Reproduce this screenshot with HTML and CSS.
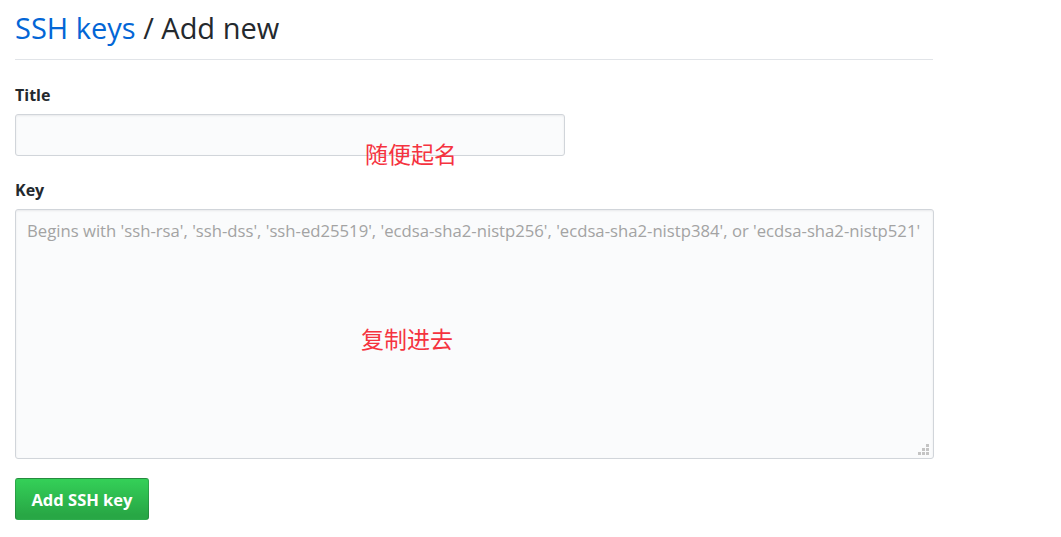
FILE: index.html
```html
<!DOCTYPE html>
<html lang="zh">
<head>
<meta charset="utf-8">
<title>SSH keys / Add new</title>
<link rel="stylesheet" href="styles.css">
</head>
<body>
<main class="page">
  <h1 class="subhead"><a class="crumb" href="#">SSH keys</a> / Add new</h1>
  <form class="form">
    <div class="group">
      <label class="label" for="title">Title</label>
      <div class="field-wrap">
        <input class="input title-input" id="title" type="text">
        <span class="note note-title">随便起名</span>
      </div>
    </div>
    <div class="group">
      <label class="label" for="key">Key</label>
      <div class="field-wrap">
        <textarea class="input key-input" id="key" placeholder="Begins with 'ssh-rsa', 'ssh-dss', 'ssh-ed25519', 'ecdsa-sha2-nistp256', 'ecdsa-sha2-nistp384', or 'ecdsa-sha2-nistp521'"></textarea>
        <span class="note note-key">复制进去</span>
        <svg class="grip" width="12" height="12" viewBox="0 0 12 12"><rect x="8" y="0" width="3" height="3"/><rect x="4" y="4" width="3" height="3"/><rect x="8" y="4" width="3" height="3"/><rect x="0" y="8" width="3" height="3"/><rect x="4" y="8" width="3" height="3"/><rect x="8" y="8" width="3" height="3"/></svg>
      </div>
    </div>
    <button class="btn" type="button">Add SSH key</button>
  </form>
</main>
</body>
</html>
```
FILE: styles.css
```css
html, body {
  margin: 0;
  padding: 0;
  background: #fff;
}
body {
  font-family: "Open Sans", "Noto Sans", "Liberation Sans", "Noto Sans CJK SC", sans-serif;
  color: #24292e;
}
.page {
  width: 918px;
  padding-left: 15px;
  padding-top: 9px;
}
.subhead {
  margin: 0;
  font-size: 29px;
  font-weight: 400;
  line-height: 38px;
  padding-bottom: 12px;
  border-bottom: 1px solid #e1e4e8;
}
.crumb {
  color: #0366d6;
  text-decoration: none;
}
.form {
  display: flex;
  flex-direction: column;
  padding-top: 24px;
}
.group {
  display: flex;
  flex-direction: column;
  margin-bottom: 23px;
}
.group:nth-child(2) {
  margin-bottom: 19px;
}
.label {
  font-size: 16px;
  font-weight: 700;
  line-height: 22px;
  margin-bottom: 8px;
}
.field-wrap {
  position: relative;
}
.input {
  box-sizing: border-box;
  display: block;
  background: #fafbfc;
  border: 1px solid #d1d5da;
  border-radius: 3px;
  box-shadow: inset 0 1px 2px rgba(27,31,35,.075);
  font-family: inherit;
  font-size: 16.7px;
  margin: 0;
}
.title-input {
  width: 550px;
  height: 42px;
}
.key-input {
  width: 919px;
  height: 250px;
  resize: none;
  padding: 9px 8px 9px 11px;
  color: #24292e;
}
.key-input::placeholder {
  color: #a3a3a3;
}
.note {
  position: absolute;
  color: #f5333f;
  font-family: "Noto Sans CJK SC", sans-serif;
  font-size: 23px;
  line-height: 1;
}
.note-title { left: 350px; top: 28px; }
.note-key { left: 346px; top: 118px; }
.grip {
  position: absolute;
  right: 3px;
  bottom: 3px;
  fill: #c4c4c4;
}
.btn {
  align-self: flex-start;
  width: 134px;
  height: 42px;
  border: 1px solid rgba(27,31,35,.2);
  border-radius: 3px;
  background: linear-gradient(-180deg, #34d058 0%, #28a745 90%);
  color: #fff;
  font-family: inherit;
  font-size: 16.5px;
  font-weight: 700;
  padding: 0;
}
```
